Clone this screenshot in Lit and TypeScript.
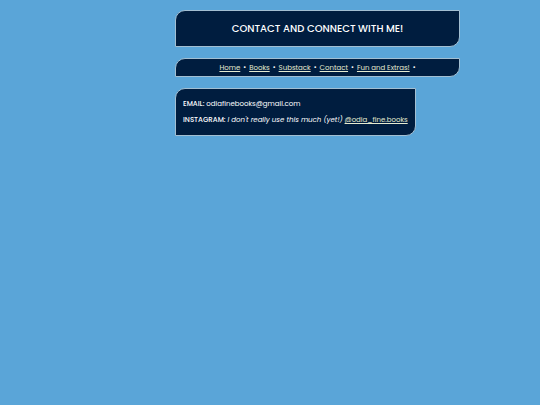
import { LitElement, html, css } from "lit";
import { customElement } from "lit/decorators.js";

const links = ["Home", "Books", "Substack", "Contact", "Fun and Extras!"];

@customElement("app-root")
export class AppRoot extends LitElement {
  static styles = css`
    :host {
      display: block;
      box-sizing: border-box;
      min-height: 100vh;
      padding-top: 10px;
      background: #5aa5d8;
      color: #fff;
      font: 400 7px/10px Poppins, Inter, sans-serif;
    }
    .page {
      display: grid;
      grid-template-columns: 175fr 285fr 80fr;
    }
    .column {
      grid-column: 2;
      display: flex;
      flex-direction: column;
      gap: 11px;
    }
    .box {
      box-sizing: border-box;
      background: #001d3f;
      border: 1px solid #a3bfd2;
      border-radius: 10px 0;
    }
    .title {
      padding: 9px;
      text-align: center;
    }
    h1 {
      margin: 0;
      font-size: 10px;
      line-height: 17px;
      font-weight: 500;
    }
    .nav {
      display: flex;
      justify-content: center;
      align-items: center;
      gap: 3px;
      padding: 4px 0;
      line-height: 9px;
      white-space: nowrap;
    }
    a {
      color: #e6ebd0;
      text-decoration: underline;
    }
    .contact {
      align-self: flex-start;
      display: flex;
      flex-direction: column;
      gap: 6px;
      padding: 10px 7px;
      white-space: nowrap;
    }
    p {
      margin: 0;
    }
    b {
      font-weight: 500;
    }
  `;

  render() {
    return html`
      <div class="page">
        <div class="column">
          <header class="box title"><h1>CONTACT AND CONNECT WITH ME!</h1></header>
          <nav class="box nav">
            ${links.map((label) => html`<a href="#">${label}</a><span>•</span>`)}
          </nav>
          <main class="box contact">
            <p><b>EMAIL:</b> odiafinebooks@gmail.com</p>
            <p>
              <b>INSTAGRAM:</b> <i>I don't really use this much (yet!)</i>
              <a href="#">@odia_fine.books</a>
            </p>
          </main>
        </div>
      </div>
    `;
  }
}
